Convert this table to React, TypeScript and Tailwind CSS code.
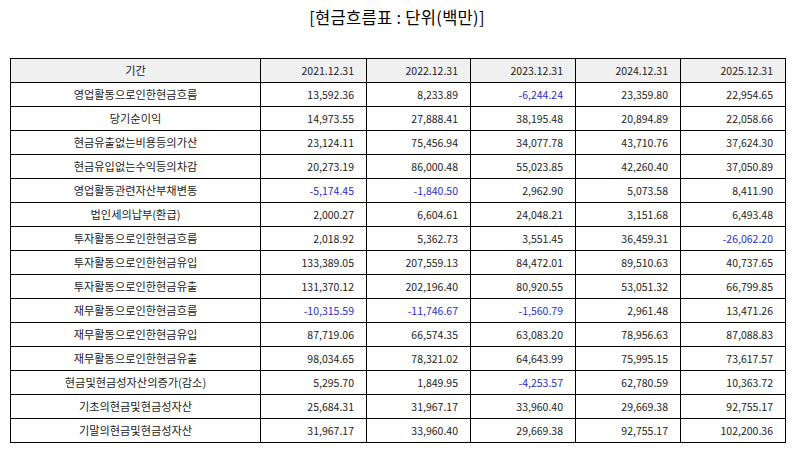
const years = ["2021.12.31", "2022.12.31", "2023.12.31", "2024.12.31", "2025.12.31"];

const rows: [string, string[]][] = [
  ["영업활동으로인한현금흐름", ["13,592.36", "8,233.89", "-6,244.24", "23,359.80", "22,954.65"]],
  ["당기순이익", ["14,973.55", "27,888.41", "38,195.48", "20,894.89", "22,058.66"]],
  ["현금유출없는비용등의가산", ["23,124.11", "75,456.94", "34,077.78", "43,710.76", "37,624.30"]],
  ["현금유입없는수익등의차감", ["20,273.19", "86,000.48", "55,023.85", "42,260.40", "37,050.89"]],
  ["영업활동관련자산부채변동", ["-5,174.45", "-1,840.50", "2,962.90", "5,073.58", "8,411.90"]],
  ["법인세의납부(환급)", ["2,000.27", "6,604.61", "24,048.21", "3,151.68", "6,493.48"]],
  ["투자활동으로인한현금흐름", ["2,018.92", "5,362.73", "3,551.45", "36,459.31", "-26,062.20"]],
  ["투자활동으로인한현금유입", ["133,389.05", "207,559.13", "84,472.01", "89,510.63", "40,737.65"]],
  ["투자활동으로인한현금유출", ["131,370.12", "202,196.40", "80,920.55", "53,051.32", "66,799.85"]],
  ["재무활동으로인한현금흐름", ["-10,315.59", "-11,746.67", "-1,560.79", "2,961.48", "13,471.26"]],
  ["재무활동으로인한현금유입", ["87,719.06", "66,574.35", "63,083.20", "78,956.63", "87,088.83"]],
  ["재무활동으로인한현금유출", ["98,034.65", "78,321.02", "64,643.99", "75,995.15", "73,617.57"]],
  ["현금및현금성자산의증가(감소)", ["5,295.70", "1,849.95", "-4,253.57", "62,780.59", "10,363.72"]],
  ["기초의현금및현금성자산", ["25,684.31", "31,967.17", "33,960.40", "29,669.38", "92,755.17"]],
  ["기말의현금및현금성자산", ["31,967.17", "33,960.40", "29,669.38", "92,755.17", "102,200.36"]],
];

const colWidths = ["w-[250px]", "w-[106px]", "w-[104px]", "w-[105px]", "w-[105px]", "w-[105px]"];

export default function App() {
  return (
    <div
      className="w-[794px] h-[452px] bg-white text-[#222]"
      style={{ fontFamily: '"Noto Sans CJK KR", "Noto Sans", sans-serif' }}
    >
      <h1 className="pt-[5px] text-center text-[16.5px] leading-[24px] tracking-[0.3px] text-black">
        [현금흐름표 : 단위(백만)]
      </h1>
      <div className="px-[10px] pt-[29px]">
        <table className="w-[775px] table-fixed border-collapse text-[10.5px]">
          <colgroup>
            {colWidths.map((w, i) => (
              <col key={i} className={w} />
            ))}
          </colgroup>
          <thead>
            <tr className="h-[24px] bg-[#f0f0f0]">
              <th className="border border-black font-normal text-center text-[11.2px]">기간</th>
              {years.map((y) => (
                <th key={y} className="border border-black font-normal text-right pr-[12px]">
                  {y}
                </th>
              ))}
            </tr>
          </thead>
          <tbody>
            {rows.map(([label, vals]) => (
              <tr key={label} className="h-[24px]">
                <td className="border border-black text-center text-[11.2px]">{label}</td>
                {vals.map((v, i) => (
                  <td
                    key={i}
                    className={`border border-black text-right pr-[12px] ${
                      v.startsWith("-") ? "text-[#2b2bd0]" : ""
                    }`}
                  >
                    {v}
                  </td>
                ))}
              </tr>
            ))}
          </tbody>
        </table>
      </div>
    </div>
  );
}
